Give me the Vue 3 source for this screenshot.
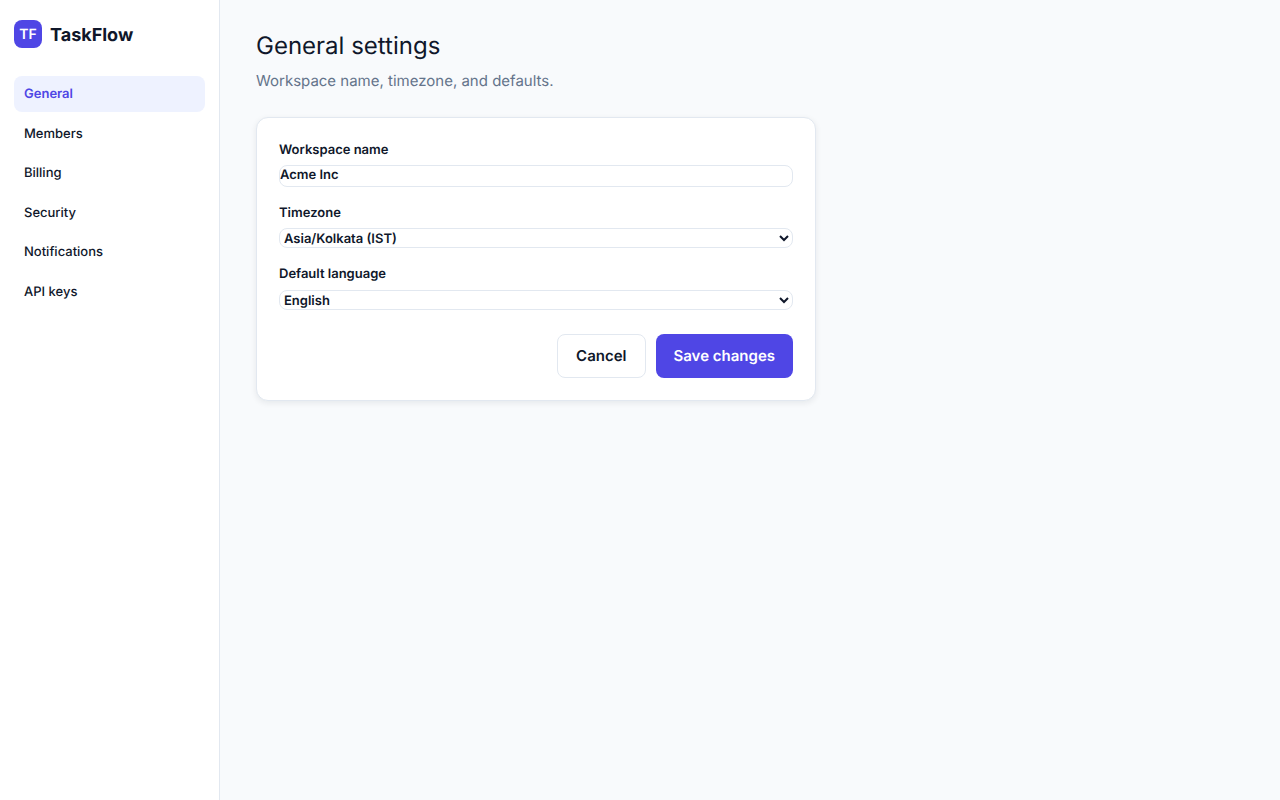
<script setup>
import { ref } from 'vue'

const links = ['General', 'Members', 'Billing', 'Security', 'Notifications', 'API keys']
const name = ref('Acme Inc')
const timezone = ref('Asia/Kolkata (IST)')
const language = ref('English')
</script>

<template>
  <div class="layout">
    <aside class="sidebar">
      <div class="brand">
        <span class="logo">TF</span>
        <span class="brand-name">TaskFlow</span>
      </div>
      <nav class="nav" aria-label="Settings">
        <a
          v-for="(link, i) in links"
          :key="link"
          href="#"
          class="nav-link"
          :class="{ active: i === 0 }"
        >{{ link }}</a>
      </nav>
    </aside>
    <main class="main">
      <h1 class="title">General settings</h1>
      <p class="subtitle">Workspace name, timezone, and defaults.</p>
      <form class="card" @submit.prevent>
        <label class="field">
          <span class="label-text">Workspace name</span>
          <input v-model="name" class="control text" type="text" />
        </label>
        <label class="field">
          <span class="label-text">Timezone</span>
          <select v-model="timezone" class="control">
            <option>Asia/Kolkata (IST)</option>
          </select>
        </label>
        <label class="field">
          <span class="label-text">Default language</span>
          <select v-model="language" class="control">
            <option>English</option>
          </select>
        </label>
        <div class="actions">
          <button type="button" class="btn">Cancel</button>
          <button type="submit" class="btn primary">Save changes</button>
        </div>
      </form>
    </main>
  </div>
</template>

<style>
body {
  margin: 0;
  background: #f8fafc;
}
</style>

<style scoped>
.layout {
  display: grid;
  grid-template-columns: 220px 1fr;
  min-height: 100vh;
  font-family: Inter, "Liberation Sans", sans-serif;
  font-size: 15px;
  line-height: 1.5;
  color: #0f172a;
  text-rendering: geometricPrecision;
}
.layout * {
  box-sizing: border-box;
}
.sidebar {
  background: #fff;
  border-right: 1px solid #e2e8f0;
  padding: 20px 14px;
}
.brand {
  display: flex;
  align-items: center;
  gap: 8px;
  height: 28px;
  margin-bottom: 28px;
  font-size: 18px;
  line-height: 28px;
  font-weight: 700;
}
.brand-name {
  padding-top: 3px;
}
.logo {
  width: 28px;
  height: 28px;
  padding-top: 1px;
  border-radius: 8px;
  background: #4f46e5;
  color: #fff;
  font-size: 14px;
  font-weight: 600;
  text-align: center;
}
.nav {
  display: flex;
  flex-direction: column;
  gap: 4px;
}
.nav-link {
  padding: 9px 10px 7px;
  border-radius: 8px;
  font-size: 13px;
  font-weight: 500;
  color: inherit;
  text-decoration: none;
}
.nav-link.active {
  background: #eef2ff;
  color: #4f46e5;
  font-weight: 600;
}
.main {
  padding: 28px 36px;
}
.title {
  margin: 0 0 6px;
  font-size: 24px;
  line-height: 36px;
  font-weight: 400;
}
.subtitle {
  margin: 0 0 24px;
  color: #64748b;
}
.card {
  display: flex;
  flex-direction: column;
  gap: 16px;
  max-width: 560px;
  padding: 22px;
  background: #fff;
  border: 1px solid #e2e8f0;
  border-radius: 12px;
  box-shadow: 0 2px 6px rgba(15, 23, 42, 0.08);
}
.field {
  display: flex;
  flex-direction: column;
  gap: 5px;
  font-size: 13px;
  font-weight: 600;
}
.label-text {
  padding-top: 1px;
}
.control {
  width: 100%;
  height: 20px;
  padding: 1px 0 0;
  border: 1px solid #e2e8f0;
  border-radius: 8px;
  background-color: #fff;
  color: inherit;
  font: inherit;
  text-rendering: inherit;
}
.text {
  height: auto;
  padding: 0;
}
.actions {
  display: flex;
  justify-content: flex-end;
  gap: 10px;
  margin-top: 8px;
}
.btn {
  height: 44px;
  padding: 2px 18px 0;
  border: 1px solid #e2e8f0;
  border-radius: 8px;
  background: #fff;
  color: inherit;
  font: inherit;
  font-weight: 600;
  text-rendering: inherit;
}
.btn.primary {
  background: #4f46e5;
  border: 0;
  color: #fff;
}
</style>
